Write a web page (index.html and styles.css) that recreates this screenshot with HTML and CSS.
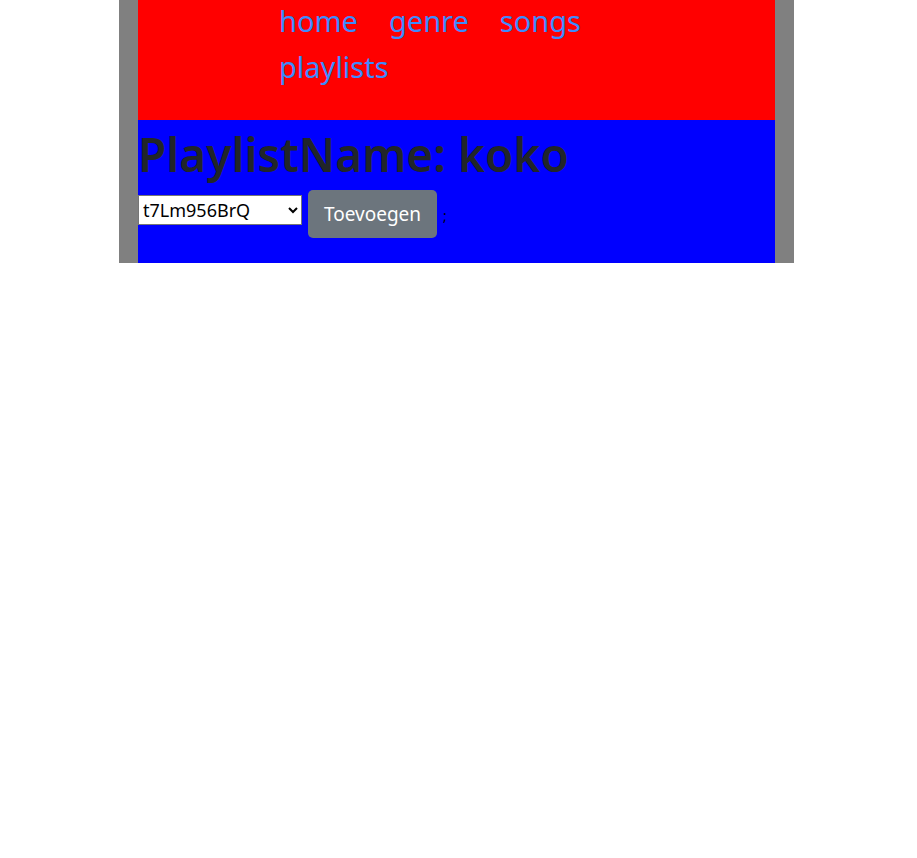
FILE: index.html
```html
<!DOCTYPE html>
<html>
<head>
    <meta charset="UTF-8">
    <title>Playlist</title>
    <link rel="stylesheet" href="styles.css">
</head>
<body>
    <div class="page">
        <header class="top">
            <nav class="menu">
                <a href="#">home</a>
                <a href="#">genre</a>
                <a href="#">songs</a>
                <a href="#">playlists</a>
            </nav>
        </header>
        <main class="content">
            <h1 class="title">PlaylistName: koko</h1>
            <form class="add-form">
                <select class="song-select">
                    <option>t7Lm956BrQ</option>
                </select>
                <button type="button" class="add-btn">Toevoegen</button>
                <span class="semi">;</span>
            </form>
        </main>
    </div>
</body>
</html>
```

FILE: styles.css
```css
body {
    margin: 0;
    font-family: "Noto Sans", "Open Sans", sans-serif;
    color: #212529;
    background: #fff;
}

.page {
    width: 637px;
    margin-left: 119px;
    padding: 0 19px;
    background: #808080;
}

.top {
    background: #ff0000;
    height: 120px;
    padding-left: 141px;
}

.menu {
    width: 320px;
    display: flex;
    flex-wrap: wrap;
    column-gap: 31px;
    line-height: 46px;
    position: relative;
    top: -2px;
}

.menu a {
    color: #3d8bfd;
    font-size: 29px;
    text-decoration: none;
}

.content {
    background: #0000ff;
    height: 143px;
}

.title {
    margin: 0;
    font-size: 46px;
    font-weight: 600;
    line-height: 68px;
}

.add-form {
    display: flex;
    align-items: flex-start;
    gap: 6px;
    margin-top: 2px;
}

.song-select {
    width: 164px;
    height: 30px;
    margin-top: 5px;
    font-family: inherit;
    font-size: 18px;
    border: 1px solid #767676;
    border-radius: 0;
    background: #fff;
    color: #000;
}

.add-btn {
    font-family: inherit;
    font-size: 19px;
    color: #fff;
    background: #6c757d;
    border: none;
    border-radius: 5px;
    padding: 0 16px;
    height: 48px;
    cursor: pointer;
}

.semi {
    margin-top: 16px;
    margin-left: 0;
    font-size: 14px;
    color: #000;
}
```
